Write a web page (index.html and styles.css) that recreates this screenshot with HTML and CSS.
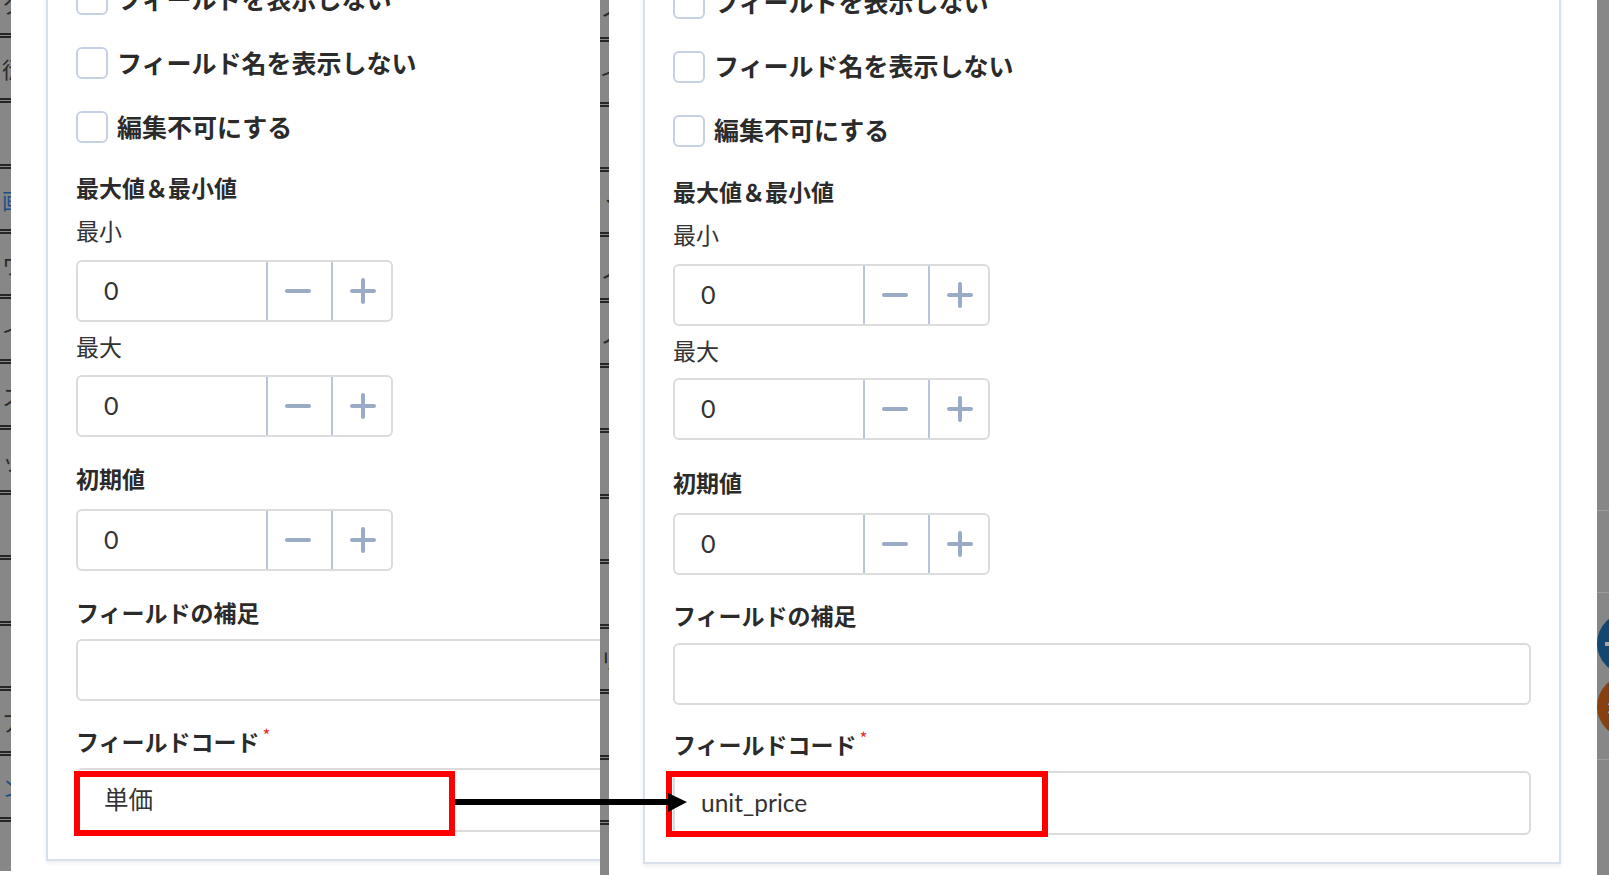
FILE: index.html
```html
<!DOCTYPE html>
<html lang="ja">
<head>
<meta charset="utf-8">
<title>フィールド設定 比較</title>
<link rel="stylesheet" href="styles.css">
</head>
<body>
<div class="composite">

  <section class="shot shot-left">
    <div class="strip strip-left">
      <div class="strip-rows rows-left">
        <div class="strip-row"><span class="frag">ク</span></div>
        <div class="strip-row"><span class="frag">衍</span></div>
        <div class="strip-row"></div>
        <div class="strip-row"><span class="frag link">画</span></div>
        <div class="strip-row"><span class="frag">ワ</span></div>
        <div class="strip-row"><span class="frag">イ</span></div>
        <div class="strip-row"><span class="frag">ス</span></div>
        <div class="strip-row"><span class="frag">ッ</span></div>
        <div class="strip-row"></div>
        <div class="strip-row"></div>
        <div class="strip-row"></div>
        <div class="strip-row"><span class="frag">ア</span></div>
        <div class="strip-row"><span class="frag link">ン</span></div>
        <div class="strip-row"></div>
      </div>
    </div>
    <div class="gutter gutter-left"></div>
    <div class="panel panel-left">
      <div class="check-row"><span class="checkbox"></span><span class="check-label">フィールドを表示しない</span></div>
      <div class="check-row"><span class="checkbox"></span><span class="check-label">フィールド名を表示しない</span></div>
      <div class="check-row"><span class="checkbox"></span><span class="check-label">編集不可にする</span></div>

      <div class="section-label range-label">最大値＆最小値</div>
      <div class="sub-label min-label">最小</div>
      <div class="num num-min">
        <div class="num-value">0</div>
        <div class="num-btn btn-minus"><svg viewBox="0 0 26 26" width="26" height="26"><path d="M2 13h22" stroke="#9aabc6" stroke-width="4" stroke-linecap="round"/></svg></div>
        <div class="num-btn btn-plus"><svg viewBox="0 0 26 26" width="26" height="26"><path d="M2 13h22M13 2v22" stroke="#9aabc6" stroke-width="4" stroke-linecap="round"/></svg></div>
      </div>
      <div class="sub-label max-label">最大</div>
      <div class="num num-max">
        <div class="num-value">0</div>
        <div class="num-btn btn-minus"><svg viewBox="0 0 26 26" width="26" height="26"><path d="M2 13h22" stroke="#9aabc6" stroke-width="4" stroke-linecap="round"/></svg></div>
        <div class="num-btn btn-plus"><svg viewBox="0 0 26 26" width="26" height="26"><path d="M2 13h22M13 2v22" stroke="#9aabc6" stroke-width="4" stroke-linecap="round"/></svg></div>
      </div>

      <div class="section-label initial-label">初期値</div>
      <div class="num num-initial">
        <div class="num-value">0</div>
        <div class="num-btn btn-minus"><svg viewBox="0 0 26 26" width="26" height="26"><path d="M2 13h22" stroke="#9aabc6" stroke-width="4" stroke-linecap="round"/></svg></div>
        <div class="num-btn btn-plus"><svg viewBox="0 0 26 26" width="26" height="26"><path d="M2 13h22M13 2v22" stroke="#9aabc6" stroke-width="4" stroke-linecap="round"/></svg></div>
      </div>

      <div class="section-label note-label">フィールドの補足</div>
      <div class="text-input note-input"></div>

      <div class="section-label code-label">フィールドコード<span class="required">*</span></div>
      <div class="text-input code-input">単価</div>
    </div>
  </section>

  <section class="shot shot-right">
    <div class="strip strip-seam">
      <div class="strip-rows rows-seam">
        <div class="strip-row"><span class="frag">ノ</span></div>
        <div class="strip-row"><span class="frag">イ</span></div>
        <div class="strip-row"></div>
        <div class="strip-row"><span class="frag">ヽ</span></div>
        <div class="strip-row"><span class="frag">ノ</span></div>
        <div class="strip-row"><span class="frag">ノ</span></div>
        <div class="strip-row"></div>
        <div class="strip-row"></div>
        <div class="strip-row"></div>
        <div class="strip-row"></div>
        <div class="strip-row"><span class="frag">リ</span></div>
        <div class="strip-row"></div>
        <div class="strip-row"></div>
        <div class="strip-row"></div>
      </div>
    </div>
    <div class="gutter gutter-seam"></div>
    <div class="panel panel-right">
      <div class="check-row"><span class="checkbox"></span><span class="check-label">フィールドを表示しない</span></div>
      <div class="check-row"><span class="checkbox"></span><span class="check-label">フィールド名を表示しない</span></div>
      <div class="check-row"><span class="checkbox"></span><span class="check-label">編集不可にする</span></div>

      <div class="section-label range-label">最大値＆最小値</div>
      <div class="sub-label min-label">最小</div>
      <div class="num num-min">
        <div class="num-value">0</div>
        <div class="num-btn btn-minus"><svg viewBox="0 0 26 26" width="26" height="26"><path d="M2 13h22" stroke="#9aabc6" stroke-width="4" stroke-linecap="round"/></svg></div>
        <div class="num-btn btn-plus"><svg viewBox="0 0 26 26" width="26" height="26"><path d="M2 13h22M13 2v22" stroke="#9aabc6" stroke-width="4" stroke-linecap="round"/></svg></div>
      </div>
      <div class="sub-label max-label">最大</div>
      <div class="num num-max">
        <div class="num-value">0</div>
        <div class="num-btn btn-minus"><svg viewBox="0 0 26 26" width="26" height="26"><path d="M2 13h22" stroke="#9aabc6" stroke-width="4" stroke-linecap="round"/></svg></div>
        <div class="num-btn btn-plus"><svg viewBox="0 0 26 26" width="26" height="26"><path d="M2 13h22M13 2v22" stroke="#9aabc6" stroke-width="4" stroke-linecap="round"/></svg></div>
      </div>

      <div class="section-label initial-label">初期値</div>
      <div class="num num-initial">
        <div class="num-value">0</div>
        <div class="num-btn btn-minus"><svg viewBox="0 0 26 26" width="26" height="26"><path d="M2 13h22" stroke="#9aabc6" stroke-width="4" stroke-linecap="round"/></svg></div>
        <div class="num-btn btn-plus"><svg viewBox="0 0 26 26" width="26" height="26"><path d="M2 13h22M13 2v22" stroke="#9aabc6" stroke-width="4" stroke-linecap="round"/></svg></div>
      </div>

      <div class="section-label note-label">フィールドの補足</div>
      <div class="text-input note-input"></div>

      <div class="section-label code-label">フィールドコード<span class="required">*</span></div>
      <div class="text-input code-input">unit_price</div>
    </div>
    <div class="gutter gutter-right"></div>
    <div class="strip strip-far">
      <div class="far-line far-line-1"></div>
      <div class="far-line far-line-2"></div>
      <div class="fab fab-blue"><span class="fab-mark"></span></div>
      <div class="fab fab-orange"><span class="fab-x">×</span></div>
      <div class="far-line far-line-3"></div>
    </div>
  </section>

  <div class="highlight highlight-left"></div>
  <div class="highlight highlight-right"></div>
  <svg class="arrow" viewBox="0 0 240 24" width="240" height="24">
    <path d="M6 12H222" stroke="#000" stroke-width="6"/>
    <polygon points="219,3 238,12 219,22" fill="#000"/>
  </svg>
</div>
</body>
</html>
```

FILE: styles.css
```css
* { box-sizing: border-box; }

html, body {
  margin: 0;
  padding: 0;
  background: #ffffff;
}

body {
  width: 1609px;
  height: 875px;
  overflow: hidden;
  font-family: "Noto Sans CJK JP", "Noto Sans", sans-serif;
  color: #2e2e2e;
}

.composite {
  position: relative;
  display: flex;
  align-items: flex-start;
  width: 1609px;
  height: 875px;
  overflow: hidden;
  background: #ffffff;
}

/* ---------- screenshots ---------- */
.shot {
  display: flex;
  align-items: flex-start;
  overflow: hidden;
  flex: none;
  background: #ffffff;
}

.shot-left {
  width: 600px;
  height: 871px;
}

.shot-right {
  width: 1009px;
  height: 875px;
}

/* dimmed background page strips */
.strip {
  align-self: stretch;
  flex: none;
  background: #878787;
  overflow: hidden;
}

.strip-left { width: 11px; }
.strip-seam { width: 9px; }
.strip-far {
  width: 12px;
  display: flex;
  flex-direction: column;
}

.strip-rows {
  display: flex;
  flex-direction: column;
}

.rows-left { margin-top: -27.3px; }
.rows-seam { margin-top: -23.8px; }

.strip-row {
  flex: none;
  height: 65.3px;
  border-bottom: 5px double #262626;
  display: flex;
  align-items: center;
  justify-content: flex-end;
  white-space: nowrap;
  overflow: hidden;
}

.frag {
  font-size: 22px;
  line-height: 1;
  color: #2a2a2a;
  margin-right: -13px;
}

.frag.link { color: #1d4f86; }

.far-line {
  height: 1px;
  background: #9d9d9d;
  flex: none;
}
.far-line-1 { margin-top: 510px; }
.far-line-2 { margin-top: 81px; }
.far-line-3 { margin-top: 21px; }

.fab {
  flex: none;
  width: 64px;
  height: 63px;
  border-radius: 50%;
  display: flex;
  align-items: center;
  padding-left: 8px;
}
.fab-blue {
  margin-top: 19px;
  background: #134670;
}
.fab-orange {
  background: #87400f;
}
.fab-mark {
  width: 8px;
  height: 4px;
  background: #a7a7a7;
}
.fab-x {
  color: #b0b0b0;
  font-size: 16px;
  font-weight: 700;
  line-height: 1;
}

.gutter { flex: none; align-self: stretch; }
.gutter-left { width: 35px; }
.gutter-seam { width: 34px; }
.gutter-right { width: 36px; }

/* ---------- settings panel ---------- */
.panel {
  flex: none;
  width: 918px;
  margin-top: -40px;
  padding: 21px 28px 27px;
  border: 2px solid #d7e0eb;
  background: #ffffff;
  box-shadow: 0 2px 4px rgba(60, 80, 110, 0.10);
  display: flex;
  flex-direction: column;
}

.panel-right { padding-top: 24.5px; }

.check-row {
  display: flex;
  align-items: center;
  gap: 9px;
  height: 32px;
}
.check-row + .check-row { margin-top: 32px; }

.checkbox {
  flex: none;
  width: 32px;
  height: 32px;
  border: 2px solid #c6d2e3;
  border-radius: 6px;
  background: #ffffff;
}

.check-label {
  font-size: 25px;
  font-weight: 700;
  line-height: 32px;
  padding-bottom: 3px;
  color: #2b2b2b;
  white-space: nowrap;
}

.section-label {
  font-size: 23px;
  font-weight: 700;
  line-height: 30px;
  height: 30px;
  color: #2b2b2b;
  white-space: nowrap;
}

.sub-label {
  font-size: 23px;
  font-weight: 400;
  line-height: 30px;
  height: 30px;
  color: #333333;
}

.range-label { margin-top: 29px; }
.min-label { margin-top: 13px; }
.num-min { margin-top: 15px; }
.max-label { margin-top: 9px; }
.num-max { margin-top: 13.5px; }
.initial-label { margin-top: 26.5px; }
.num-initial { margin-top: 16px; }
.note-label { margin-top: 25.7px; }
.note-input { margin-top: 12.6px; }
.code-label { margin-top: 24.7px; }
.code-input { margin-top: 12px; }

.required {
  display: inline-block;
  vertical-align: top;
  margin-left: 3px;
  font-size: 17px;
  font-weight: 400;
  line-height: 17px;
  color: #e2332c;
}

/* number spinner */
.num {
  display: flex;
  width: 317px;
  height: 62px;
  border: 2px solid #dcdcdc;
  border-radius: 6px;
  background: #ffffff;
}

.num-value {
  width: 188px;
  padding-left: 26px;
  padding-bottom: 2px;
  display: flex;
  align-items: center;
  font-family: Lato, "Noto Sans CJK JP", sans-serif;
  font-size: 25px;
  color: #333333;
}

.num-btn {
  display: flex;
  align-items: center;
  justify-content: center;
  border-left: 2px solid #b9c6d9;
}
.btn-minus { width: 65px; padding-right: 3px; }
.btn-plus { flex: 1; padding-left: 2px; }
.num-btn svg { display: block; }

/* text inputs */
.text-input {
  width: 100%;
  height: 62px;
  border: 2px solid #dcdcdc;
  border-radius: 6px;
  background: #ffffff;
  padding-left: 26px;
  padding-bottom: 2px;
  display: flex;
  align-items: center;
  font-family: Lato, "Noto Sans CJK JP", sans-serif;
  font-size: 24.5px;
  color: #333333;
}

.code-input { height: 64px; }

/* ---------- annotations ---------- */
.highlight {
  position: absolute;
  border: 6px solid #ff0000;
  height: 65px;
}
.highlight-left {
  left: 74px;
  top: 771px;
  width: 381px;
}
.highlight-right {
  left: 665.5px;
  top: 771px;
  width: 382px;
  height: 65.5px;
}

.arrow {
  position: absolute;
  left: 449px;
  top: 790px;
  display: block;
}
```
